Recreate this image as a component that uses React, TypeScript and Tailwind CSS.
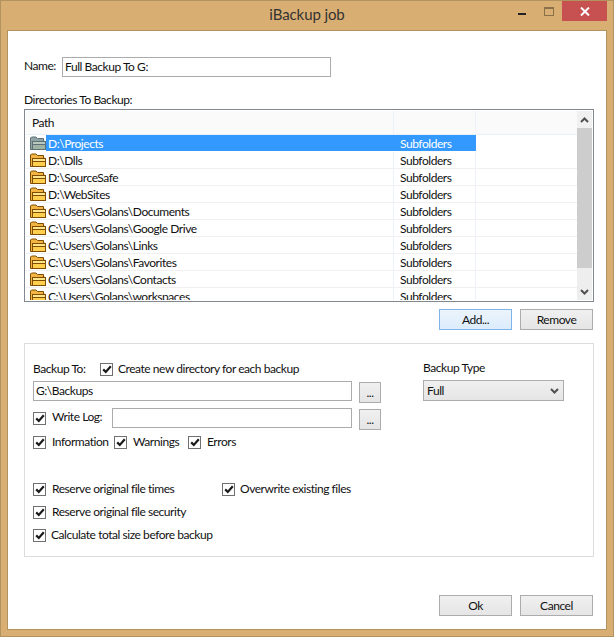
const rows = [
  "D:\\Projects",
  "D:\\Dlls",
  "D:\\SourceSafe",
  "D:\\WebSites",
  "C:\\Users\\Golans\\Documents",
  "C:\\Users\\Golans\\Google Drive",
  "C:\\Users\\Golans\\Links",
  "C:\\Users\\Golans\\Favorites",
  "C:\\Users\\Golans\\Contacts",
  "C:\\Users\\Golans\\workspaces",
]

function Folder({ selected }: { selected: boolean }) {
  const edge = selected ? "#5d7078" : "#7f4c00"
  const back = selected ? "#8fa3a3" : "#f2b544"
  const front = selected ? "#9fb3a3" : "#ffcf4d"
  const band = selected ? "#b9c9bb" : "#ffe58a"
  return (
    <svg width="16" height="14" viewBox="0 0 16 14" className="shrink-0">
      <path d="M0.5 13.5V2L1.5 1H6L7.5 2.5H13.5V5H14.5V13.5Z" fill={back} stroke={edge} />
      <rect x="2.5" y="5.5" width="13" height="8" fill={front} stroke={edge} />
      <rect x="3" y="6" width="12" height="2" fill={band} />
      <line x1="3" y1="8.5" x2="15" y2="8.5" stroke={edge} />
    </svg>
  )
}

function Box({ label, gap = "gap-[6px]" }: { label: string; gap?: string }) {
  return (
    <div className={`flex h-[13px] items-center ${gap}`}>
      <span className="flex h-[13px] w-[13px] shrink-0 items-center justify-center border border-[#707070] bg-white">
        <svg width="10" height="9" viewBox="0 0 10 9">
          <path d="M1.2 4.4L3.8 7L8.8 1.2" fill="none" stroke="#1a1a1a" strokeWidth="2.2" />
        </svg>
      </span>
      <span className="whitespace-nowrap pb-[2px]">{label}</span>
    </div>
  )
}

function Btn({ label, active = false }: { label: string; active?: boolean }) {
  return (
    <button
      className={`h-[21px] w-[73px] border text-center ${
        active
          ? "border-[#7eb4ea] bg-gradient-to-b from-[#ecf4fc] to-[#dcecfc]"
          : "border-[#acacac] bg-gradient-to-b from-[#f0f0f0] to-[#e5e5e5]"
      }`}
    >
      {label}
    </button>
  )
}

function Dots() {
  return (
    <button className="ml-[7px] mt-px h-[21px] w-[22px] border border-[#acacac] bg-gradient-to-b from-[#f0f0f0] to-[#e5e5e5] text-center">
      ...
    </button>
  )
}

export default function App() {
  return (
    <div
      className="flex h-[637px] w-[614px] flex-col overflow-hidden border border-[#b1935f] bg-[#d9ae72] text-[12px] leading-none tracking-[-0.45px] text-[#111]"
      style={{ fontFamily: 'Lato, "Open Sans", sans-serif' }}
    >
      {/* title bar */}
      <div className="relative flex h-[29px] shrink-0 items-center justify-center text-[#333]">
        <span className="pb-[2px] text-[15px] tracking-[-0.1px]">iBackup job</span>
        <div className="absolute right-[6px] top-0 flex items-start">
          <div className="mr-[18px] mt-[12px] h-[2px] w-[8px] bg-[#222]" />
          <div className="mr-[8px] mt-[6px] h-[9px] w-[10px] border border-t-2 border-[#8a7048]" />
          <div className="flex h-[20px] w-[45px] items-center justify-center bg-[#c75050]">
            <svg width="10" height="9" viewBox="0 0 10 9">
              <path d="M1 0.5L9 8.5M9 0.5L1 8.5" stroke="#fff" strokeWidth="2" />
            </svg>
          </div>
        </div>
      </div>

      {/* client area */}
      <div className="mx-[6px] flex h-[600px] flex-col border border-[#b1935f] bg-white pl-[16px] pr-[12px]">
        <div className="mt-[26px] flex h-[20px] items-center">
          <span className="w-[38px] pb-[2px]">Name:</span>
          <div className="flex h-[20px] w-[269px] items-center border border-[#ababab] px-[2px]">Full Backup To G:</div>
        </div>

        <div className="mt-[17px] h-[14px]">Directories To Backup:</div>

        {/* directories list */}
        <div className="mt-px flex h-[193px] w-[570px] border border-[#828790] p-px">
          <div className="flex min-w-0 flex-1 flex-col overflow-hidden">
            <div className="flex h-[24px] shrink-0 border-b border-[#e8f0f8] bg-[#fafafa]">
              <div className="flex w-[368px] items-center border-r border-[#edf2f8] pl-[6px]">Path</div>
              <div className="w-[82px] border-r border-[#edf2f8]" />
            </div>
            {rows.map((path, i) => (
              <div key={path} className={`flex h-[17px] shrink-0 items-center border-b ${i === 0 ? "border-white" : "border-[#f0f0f0]"}`}>
                <div className={`flex h-full w-[368px] items-center border-r pl-[4px] ${i === 0 ? "border-[#3399ff]" : "border-[#edf2f8]"}`}>
                  <Folder selected={i === 0} />
                  <span className={`flex h-full flex-1 items-center pl-[2px] pt-px ${i === 0 ? "bg-[#3399ff] text-white" : ""}`}>
                    {path}
                  </span>
                </div>
                <div className={`flex h-full w-[82px] items-center pl-[6px] pt-px ${i === 0 ? "bg-[#3399ff] text-white" : "border-r border-[#edf2f8]"}`}>
                  Subfolders
                </div>
              </div>
            ))}
          </div>
          {/* scrollbar */}
          <div className="flex w-[15px] shrink-0 flex-col bg-[#eeeeee]">
            <div className="flex h-[17px] items-center justify-center bg-[#f0f0f0]">
              <svg width="9" height="6" viewBox="0 0 9 6"><path d="M1 5L4.5 1.5L8 5" fill="none" stroke="#505050" strokeWidth="2" /></svg>
            </div>
            <div className="h-[140px] bg-[#cdcdcd]" />
            <div className="flex-1" />
            <div className="flex h-[17px] items-center justify-center">
              <svg width="9" height="6" viewBox="0 0 9 6"><path d="M1 1L4.5 4.5L8 1" fill="none" stroke="#505050" strokeWidth="2" /></svg>
            </div>
          </div>
        </div>

        <div className="mt-[7px] flex w-[569px] justify-end gap-[8px]">
          <Btn label="Add..." active />
          <Btn label="Remove" />
        </div>

        {/* options */}
        <div className="mt-[13px] flex h-[214px] w-[570px] shrink-0 border border-[#dcdcdc] pl-[8px]">
          <div className="w-[390px]">
            <div className="mt-[19px] flex h-[13px] items-center">
              <span className="w-[67px] pb-[2px]">Backup To:</span>
              <Box label="Create new directory for each backup" gap="gap-[5px]" />
            </div>
            <div className="mt-[5px] flex items-start">
              <div className="flex h-[20px] w-[319px] items-center border border-[#ababab] px-[2px]">G:\Backups</div>
              <Dots />
            </div>
            <div className="mt-[5px] flex items-start">
              <div className="flex h-[20px] w-[79px] items-center">
                <Box label="Write Log:" />
              </div>
              <div className="h-[20px] w-[240px] border border-[#ababab]" />
              <Dots />
            </div>
            <div className="mt-[6px] flex h-[13px] items-center">
              <div className="w-[81px]"><Box label="Information" /></div>
              <div className="w-[74px]"><Box label="Warnings" /></div>
              <Box label="Errors" />
            </div>
            <div className="mt-[34px] flex h-[13px] items-center">
              <div className="w-[189px]"><Box label="Reserve original file times" /></div>
              <Box label="Overwrite existing files" gap="gap-[5px]" />
            </div>
            <div className="mt-[10px]"><Box label="Reserve original file security" /></div>
            <div className="mt-[10px]"><Box label="Calculate total size before backup" gap="gap-[5px]" /></div>
          </div>
          <div>
            <div className="mt-[18px] h-[14px]">Backup Type</div>
            <div className="mt-[4px] flex h-[21px] w-[141px] items-center justify-between border border-[#acacac] bg-gradient-to-b from-[#f0f0f0] to-[#e5e5e5] pl-[3px] pr-[4px]">
              <span>Full</span>
              <svg width="9" height="6" viewBox="0 0 9 6"><path d="M1 1L4.5 4.5L8 1" fill="none" stroke="#505050" strokeWidth="2" /></svg>
            </div>
          </div>
        </div>

        <div className="mt-[38px] flex w-[569px] justify-end gap-[8px]">
          <Btn label="Ok" />
          <Btn label="Cancel" />
        </div>
      </div>
    </div>
  )
}
